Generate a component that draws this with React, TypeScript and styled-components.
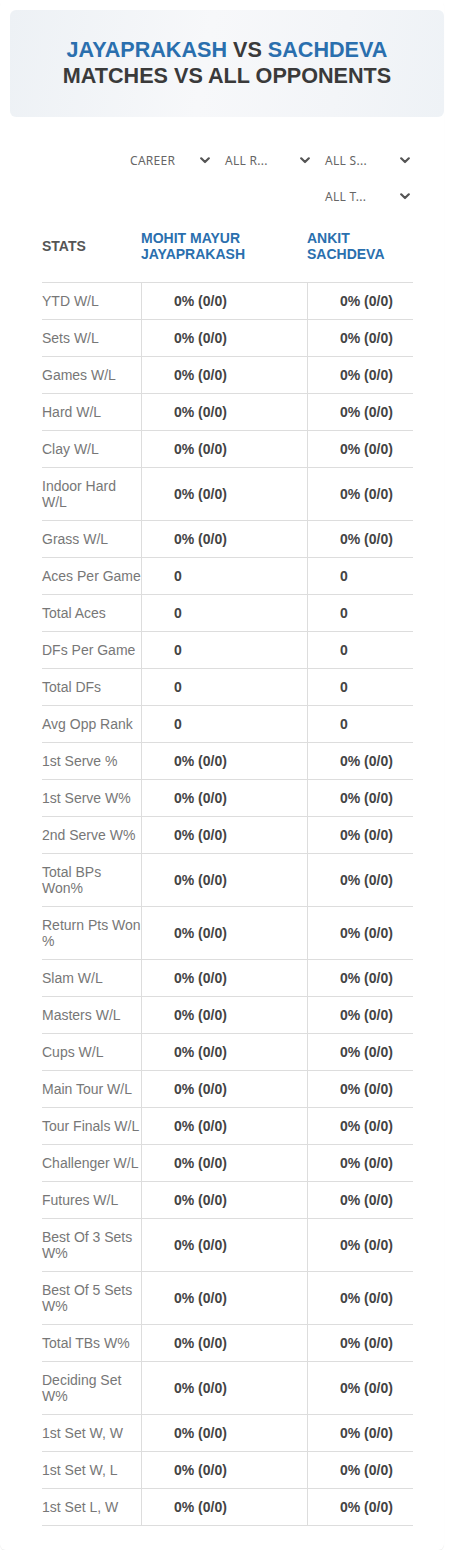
import React from "react";
import styled, { createGlobalStyle } from "styled-components";

const GlobalStyle = createGlobalStyle`
  html, body { margin: 0; padding: 0; background: #ffffff; }
  body { font-family: "Liberation Sans", Arial, sans-serif; }
  * { box-sizing: border-box; }
`;

const Card = styled.div`
  width: 444px;
  padding: 10px 0 24px 10px;
  border-radius: 6px;
  box-shadow: 0 1px 1px rgba(0, 0, 0, 0.07);
  background: #ffffff;
`;

const Banner = styled.div`
  border-radius: 6px;
  padding: 27px 6px 28px;
  background: linear-gradient(100deg, #edf1f5 0%, #f7f8fa 45%, #f3f5f8 75%, #eef2f6 100%);
  text-align: center;
`;

const TitleLine = styled.div`
  font-family: "Liberation Sans", Arial, sans-serif;
  font-weight: 700;
  font-size: 21.6px;
  line-height: 26px;
  color: #3a3a3a;
  text-transform: uppercase;
  white-space: nowrap;
`;

const Blue = styled.span`
  color: #2a6fae;
`;

const Body = styled.div`
  padding: 0 31px 0 32px;
`;

const Filters = styled.div`
  margin-top: 28px;
  display: flex;
  flex-wrap: wrap;
  justify-content: flex-end;
  column-gap: 5px;
  row-gap: 6px;
`;

const Select = styled.div<{ $indent?: number }>`
  width: 95px;
  height: 30px;
  display: flex;
  align-items: center;
  justify-content: space-between;
  padding: 0 3px 0 ${(p) => p.$indent ?? 7}px;
  font-family: "Noto Sans", "Open Sans", sans-serif;
  font-size: 12px;
  letter-spacing: 0.3px;
  color: #666666;
  text-transform: uppercase;
`;

const SelectText = styled.span`
  white-space: nowrap;
`;

const Chevron = () => (
  <svg width="10" height="7" viewBox="0 0 10 7" aria-hidden="true">
    <polyline points="1.2,1.3 5,5 8.8,1.3" fill="none" stroke="#555" strokeWidth="2.2" strokeLinecap="round" strokeLinejoin="round" />
  </svg>
);

const Table = styled.div`
  margin-top: 0;
`;

const Row = styled.div`
  display: grid;
  grid-template-columns: 99px 166px 1fr;
  border-bottom: 1px solid #dddddd;
  font-size: 14px;
  line-height: 16px;
`;

const HeadCell = styled.div<{ $blue?: boolean }>`
  padding: 19px 0 20px;
  display: flex;
  align-items: center;
  font-weight: 700;
  text-transform: uppercase;
  color: ${(p) => (p.$blue ? "#2a6fae" : "#555555")};
`;

const Label = styled.div`
  padding: 10px 0;
  display: flex;
  align-items: center;
  color: #777777;
  margin-right: -1px;
`;

const Value = styled.div`
  padding: 10px 0 10px 32px;
  display: flex;
  align-items: center;
  border-left: 1px solid #dddddd;
  font-weight: 700;
  color: #444444;
`;

const pct = "0% (0/0)";
const rows: [string, string][] = [
  ["YTD W/L", pct],
  ["Sets W/L", pct],
  ["Games W/L", pct],
  ["Hard W/L", pct],
  ["Clay W/L", pct],
  ["Indoor Hard W/L", pct],
  ["Grass W/L", pct],
  ["Aces Per Game", "0"],
  ["Total Aces", "0"],
  ["DFs Per Game", "0"],
  ["Total DFs", "0"],
  ["Avg Opp Rank", "0"],
  ["1st Serve %", pct],
  ["1st Serve W%", pct],
  ["2nd Serve W%", pct],
  ["Total BPs Won%", pct],
  ["Return Pts Won %", pct],
  ["Slam W/L", pct],
  ["Masters W/L", pct],
  ["Cups W/L", pct],
  ["Main Tour W/L", pct],
  ["Tour Finals W/L", pct],
  ["Challenger W/L", pct],
  ["Futures W/L", pct],
  ["Best Of 3 Sets W%", pct],
  ["Best Of 5 Sets W%", pct],
  ["Total TBs W%", pct],
  ["Deciding Set W%", pct],
  ["1st Set W, W", pct],
  ["1st Set W, L", pct],
  ["1st Set L, W", pct],
];

const filters: { text: string; indent?: number }[] = [
  { text: "Career", indent: 12 },
  { text: "All R..." },
  { text: "All S..." },
  { text: "All T..." },
];

export default function App() {
  return (
    <>
      <GlobalStyle />
      <Card>
        <Banner>
          <TitleLine>
            <Blue>Jayaprakash</Blue> vs <Blue>Sachdeva</Blue>
          </TitleLine>
          <TitleLine>Matches vs All Opponents</TitleLine>
        </Banner>
        <Body>
          <Filters>
            {filters.map((f) => (
              <Select key={f.text} $indent={f.indent}>
                <SelectText>{f.text}</SelectText>
                <Chevron />
              </Select>
            ))}
          </Filters>
          <Table>
            <Row>
              <HeadCell>Stats</HeadCell>
              <HeadCell $blue>Mohit Mayur Jayaprakash</HeadCell>
              <HeadCell $blue>Ankit Sachdeva</HeadCell>
            </Row>
            {rows.map(([label, v]) => (
              <Row key={label}>
                <Label>{label}</Label>
                <Value>{v}</Value>
                <Value>{v}</Value>
              </Row>
            ))}
          </Table>
        </Body>
      </Card>
    </>
  );
}
